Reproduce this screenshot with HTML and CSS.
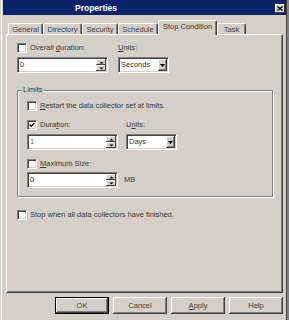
FILE: index.html
```html
<!DOCTYPE html>
<html>
<head>
<meta charset="utf-8">
<link rel="stylesheet" href="styles.css">
</head>
<body>
<div class="window">
  <div class="titlebar">
    <span class="title">Properties</span>
    <span class="close"><svg width="6" height="5" viewBox="0 0 6 5"><path d="M0.5 0.5 L5.5 4.5 M5.5 0.5 L0.5 4.5" stroke="#000" stroke-width="1.1" fill="none"/></svg></span>
  </div>
  <div class="body">
    <div class="tabs">
      <div class="tab t-general">General</div>
      <div class="tab t-directory">Directory</div>
      <div class="tab t-security">Security</div>
      <div class="tab t-schedule">Schedule</div>
      <div class="tab t-stop selected">Stop Condition</div>
      <div class="tab t-task">Task</div>
    </div>
    <div class="panel">
      <div class="row">
        <div class="col c-main">
          <div class="chk"><span class="box"></span><span>Overall <u>d</u>uration:</span></div>
          <div class="field"><span class="val">0</span><span class="spin"><span class="sb"><svg width="5" height="3" viewBox="0 0 5 3"><path d="M2.5 0.5 L4.5 2.5 L0.5 2.5 Z" fill="#000"/></svg></span><span class="sb"><svg width="5" height="3" viewBox="0 0 5 3"><path d="M0.5 0.5 L4.5 0.5 L2.5 2.5 Z" fill="#000"/></svg></span></span></div>
        </div>
        <div class="col c-units">
          <div class="lbl"><u>U</u>nits:</div>
          <div class="select"><span class="val">Seconds</span><span class="drop"><svg width="5" height="3" viewBox="0 0 5 3"><path d="M0 0 L5 0 L2.5 3 Z" fill="#000"/></svg></span></div>
        </div>
      </div>

      <div class="group">
        <span class="legend">Limits</span>
        <div class="chk g-restart"><span class="box"></span><span><u>R</u>estart the data collector set at limits.</span></div>
        <div class="row g-dur">
          <div class="col c-main">
            <div class="chk"><span class="box"><svg width="6" height="6" viewBox="0 0 6 6"><path d="M0.6 2.6 L2.2 4.3 L5.4 0.9" stroke="#000" stroke-width="1.4" fill="none"/></svg></span><span>Dura<u>t</u>ion:</span></div>
            <div class="field"><span class="val dim">1</span><span class="spin"><span class="sb"><svg width="5" height="3" viewBox="0 0 5 3"><path d="M2.5 0.5 L4.5 2.5 L0.5 2.5 Z" fill="#000"/></svg></span><span class="sb"><svg width="5" height="3" viewBox="0 0 5 3"><path d="M0.5 0.5 L4.5 0.5 L2.5 2.5 Z" fill="#000"/></svg></span></span></div>
          </div>
          <div class="col c-units">
            <div class="lbl">U<u>n</u>its:</div>
            <div class="select"><span class="val">Days</span><span class="drop"><svg width="5" height="3" viewBox="0 0 5 3"><path d="M0 0 L5 0 L2.5 3 Z" fill="#000"/></svg></span></div>
          </div>
        </div>
        <div class="chk g-max"><span class="box"></span><span><u>M</u>aximum Size:</span></div>
        <div class="mrow">
          <div class="field"><span class="val">0</span><span class="spin"><span class="sb"><svg width="5" height="3" viewBox="0 0 5 3"><path d="M2.5 0.5 L4.5 2.5 L0.5 2.5 Z" fill="#000"/></svg></span><span class="sb"><svg width="5" height="3" viewBox="0 0 5 3"><path d="M0.5 0.5 L4.5 0.5 L2.5 2.5 Z" fill="#000"/></svg></span></span></div>
          <span class="unit">MB</span>
        </div>
      </div>

      <div class="chk stop"><span class="box"></span><span>Stop when all data collectors have finished.</span></div>
    </div>
    <div class="buttons">
      <div class="btn default">OK</div>
      <div class="btn">Cancel</div>
      <div class="btn"><u>A</u>pply</div>
      <div class="btn">Help</div>
    </div>
  </div>
</div>
</body>
</html>
```
FILE: styles.css
```css
* { box-sizing: border-box; }
html, body {
  margin: 0;
  padding: 0;
  width: 289px;
  height: 320px;
  overflow: hidden;
  background: #d4d0c8;
}
body {
  font-family: "Liberation Sans", Arial, sans-serif;
  font-size: 7.5px;
  color: #3a3a3a;
  line-height: 10px;
}
u { text-decoration: underline; text-underline-offset: 1px; }

.window {
  height: 320px;
  padding: 0 3px;
  background: #d4d0c8;
  box-shadow: inset 1px 0 #d4d0c8, inset 2px 0 #ffffff, inset -2px 0 #808080, inset -3px 0 #404040;
}

.titlebar {
  height: 15px;
  background: #0a246a;
  display: flex;
  align-items: center;
  padding-left: 72px;
}
.title {
  color: #fff;
  font-weight: bold;
  font-size: 8.5px;
}
.close {
  margin-left: auto;
  margin-right: 1px;
  margin-top: 1px;
  width: 10px;
  height: 9px;
  background: #d4d0c8;
  box-shadow: inset -1px -1px #404040, inset 1px 1px #ffffff;
  display: flex;
  align-items: center;
  justify-content: center;
}

.body {
  padding: 5px 3px 0 3px;
}

.tabs {
  height: 14px;
  display: flex;
  align-items: flex-end;
  padding-left: 2px;
}
.tab {
  height: 11px;
  display: flex;
  align-items: center;
  justify-content: center;
  border-top: 1px solid #fff;
  border-left: 1px solid #fff;
  border-right: 1px solid #404040;
  box-shadow: inset -1px 0 #808080;
  border-radius: 2px 2px 0 0;
  color: #444;
  padding-top: 1px;
}
.tab.selected {
  height: 15px;
  margin-bottom: -1px;
  position: relative;
  z-index: 1;
  background: #d4d0c8;
  padding-top: 0;
  padding-bottom: 3px;
  color: #333;
}
.t-general { width: 35px; }
.t-directory { width: 39px; }
.t-security { width: 36px; }
.t-schedule { width: 40px; }
.t-stop { width: 59px; }
.t-task { width: 29px; }

.panel {
  height: 259px;
  border-top: 1px solid #fff;
  border-left: 1px solid #fff;
  border-right: 1px solid #404040;
  border-bottom: 1px solid #404040;
  box-shadow: inset -1px -1px #808080;
  padding: 8px 9px 0 10px;
}

.row {
  display: flex;
  gap: 10px;
}
.col {
  display: flex;
  flex-direction: column;
  gap: 4px;
}
.c-main { width: 91px; }
.c-units { width: 51px; }

.chk {
  display: flex;
  align-items: center;
  gap: 3px;
  height: 10px;
  white-space: nowrap;
}
.box {
  width: 10px;
  height: 10px;
  flex: none;
  background: #fff;
  border-top: 1px solid #808080;
  border-left: 1px solid #808080;
  border-right: 1px solid #fff;
  border-bottom: 1px solid #fff;
  box-shadow: inset 1px 1px #404040, inset -1px -1px #d4d0c8;
  display: flex;
  align-items: center;
  justify-content: center;
}
.lbl {
  height: 10px;
  white-space: nowrap;
}

.field, .select {
  height: 16px;
  background: #fff;
  border-top: 1px solid #808080;
  border-left: 1px solid #808080;
  border-right: 1px solid #fff;
  border-bottom: 1px solid #fff;
  box-shadow: inset 1px 1px #404040, inset -1px -1px #d4d0c8;
  padding: 1px 1px 1px 2px;
  display: flex;
  align-items: center;
}
.field { width: 91px; }
.select { width: 51px; }
.val {
  flex: 1;
  color: #333;
}
.val.dim { color: #666; }

.spin {
  width: 10px;
  height: 12px;
  display: flex;
  flex-direction: column;
}
.sb {
  height: 6px;
  background: #d4d0c8;
  box-shadow: inset -1px -1px #404040, inset 1px 1px #ffffff;
  display: flex;
  align-items: center;
  justify-content: center;
}
.drop {
  width: 9px;
  height: 12px;
  background: #d4d0c8;
  box-shadow: inset -1px -1px #404040, inset 1px 1px #ffffff, inset -2px -2px #808080;
  display: flex;
  align-items: center;
  justify-content: center;
}

.group {
  position: relative;
  margin-top: 17px;
  width: 256px;
  border: 1px solid #808080;
  box-shadow: inset 1px 1px #fff, 1px 1px #fff;
  padding: 10px 0 8px 9px;
}
.legend {
  position: absolute;
  top: -6px;
  left: 4px;
  padding: 0 1px;
  background: #d4d0c8;
  line-height: 10px;
}
.g-restart { margin-bottom: 9px; }
.g-dur { gap: 8px; margin-bottom: 9px; }
.g-max { margin-bottom: 3px; }
.mrow {
  display: flex;
  align-items: center;
  gap: 6px;
}

.stop { margin-top: 13px; }

.buttons {
  margin-top: 4px;
  display: flex;
  justify-content: flex-end;
  gap: 4px;
}
.btn {
  width: 54px;
  height: 17px;
  background: #d4d0c8;
  box-shadow: inset -1px -1px #404040, inset 1px 1px #ffffff, inset -2px -2px #808080, inset 2px 2px #d4d0c8;
  display: flex;
  align-items: center;
  justify-content: center;
  color: #444;
}
.btn.default {
  border: 1px solid #000;
}
```
